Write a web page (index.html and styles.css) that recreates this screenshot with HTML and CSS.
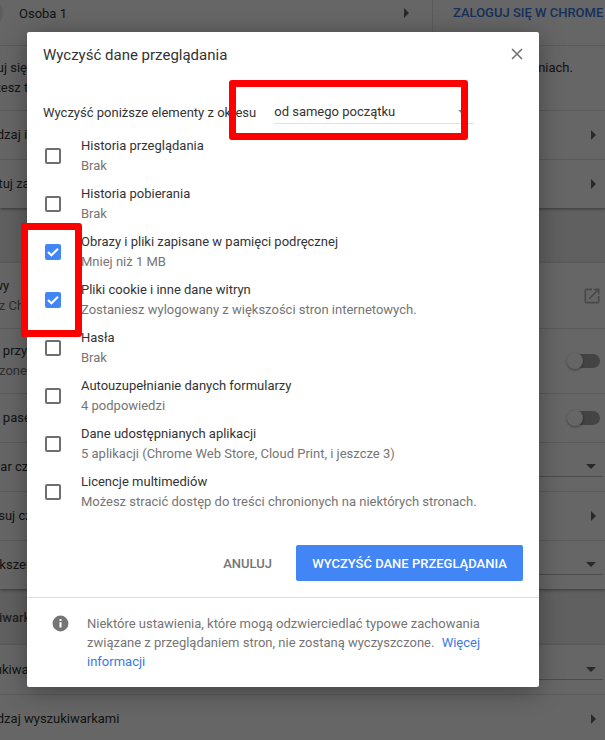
FILE: index.html
```html
<!DOCTYPE html>
<html lang="pl">
<head>
  <meta charset="UTF-8" />
  <meta name="viewport" content="width=device-width, initial-scale=1.0" />
  <title>Wyczyść dane przeglądania</title>
  <link rel="stylesheet" href="styles.css">
</head>
<body>
  <div class="settings">
    <section class="card">
      <div class="row person">
        <div class="avatar"></div>
        <span class="person-name">Osoba 1</span>
        <i class="arrow person-arrow"></i>
        <a class="signin">ZALOGUJ SIĘ W CHROME</a>
      </div>
      <div class="row tall">
        <div class="text">
          <div>Zaloguj się, żeby synchronizować zakładki, historię, hasła i inne twoje ustawienia na swoich urządzeniach.</div>
          <div>A możesz też zarządzać</div>
        </div>
      </div>
      <div class="row"><span class="text">Zarządzaj innymi</span><i class="arrow"></i></div>
      <div class="row"><span class="text">Importuj zakładki</span><i class="arrow"></i></div>
    </section>

    <div class="gap first-gap"></div>

    <section class="card">
      <div class="row tall">
        <div class="text">
          <div>Motywy</div>
          <div class="muted">Otwórz Chrome Web Store</div>
        </div>
        <svg class="external" viewBox="0 0 24 24"><path d="M19 19H5V5h7V3H5a2 2 0 0 0-2 2v14a2 2 0 0 0 2 2h14a2 2 0 0 0 2-2v-7h-2v7zM14 3v2h3.6l-9.8 9.8 1.4 1.4L19 6.4V10h2V3h-7z"/></svg>
      </div>
      <div class="row tall">
        <div class="text">
          <div>Pokaż przycisk strony</div>
          <div class="muted">Wyłączone</div>
        </div>
        <div class="toggle"></div>
      </div>
      <div class="row"><span class="text">Pokaż pasek zakładek</span><div class="toggle"></div></div>
      <div class="row"><span class="text">Rozmiar czcionki</span><div class="select"><i class="caret"></i></div></div>
      <div class="row"><span class="text">Dostosuj czcionki</span><i class="arrow"></i></div>
      <div class="row"><span class="text">Powiększenie strony</span><div class="select"><i class="caret"></i></div></div>
    </section>

    <div class="gap"><span class="gap-title">Wyszukiwarka</span></div>

    <section class="card">
      <div class="row"><span class="text">Wyszukiwarka używana</span><div class="select"><i class="caret"></i></div></div>
      <div class="row"><span class="text">Zarządzaj wyszukiwarkami</span><i class="arrow"></i></div>
    </section>
  </div>

  <div class="scrim"></div>

  <div class="dialog">
    <div class="dialog-head">
      <h1>Wyczyść dane przeglądania</h1>
      <svg class="close" viewBox="0 0 12 12"><path d="M1 1l10 10M11 1L1 11"/></svg>
    </div>

    <div class="period">
      <span>Wyczyść poniższe elementy z okresu</span>
      <div class="period-select">od samego początku<i class="caret small"></i></div>
    </div>

    <ul class="items">
      <li><span class="check"></span><div><div>Historia przeglądania</div><div class="sub">Brak</div></div></li>
      <li><span class="check"></span><div><div>Historia pobierania</div><div class="sub">Brak</div></div></li>
      <li>
        <span class="check on"><svg viewBox="0 0 16 16"><path d="M3 8l3.4 3.2L13 4.8"/></svg></span>
        <div><div>Obrazy i pliki zapisane w pamięci podręcznej</div><div class="sub">Mniej niż 1 MB</div></div>
      </li>
      <li>
        <span class="check on"><svg viewBox="0 0 16 16"><path d="M3 8l3.4 3.2L13 4.8"/></svg></span>
        <div><div>Pliki cookie i inne dane witryn</div><div class="sub">Zostaniesz wylogowany z większości stron internetowych.</div></div>
      </li>
      <li><span class="check"></span><div><div>Hasła</div><div class="sub">Brak</div></div></li>
      <li><span class="check"></span><div><div>Autouzupełnianie danych formularzy</div><div class="sub">4 podpowiedzi</div></div></li>
      <li><span class="check"></span><div><div>Dane udostępnianych aplikacji</div><div class="sub">5 aplikacji (Chrome Web Store, Cloud Print, i jeszcze 3)</div></div></li>
      <li><span class="check"></span><div><div>Licencje multimediów</div><div class="sub">Możesz stracić dostęp do treści chronionych na niektórych stronach.</div></div></li>
    </ul>

    <div class="actions">
      <button class="cancel">ANULUJ</button>
      <button class="confirm">WYCZYŚĆ DANE PRZEGLĄDANIA</button>
    </div>

    <div class="note">
      <svg class="info" viewBox="0 0 24 24"><path d="M12 2a10 10 0 1 0 0 20 10 10 0 0 0 0-20zm1.3 15h-2.6v-6.5h2.6V17zm0-8.2h-2.6V6.3h2.6v2.5z"/></svg>
      <p>Niektóre ustawienia, które mogą odzwierciedlać typowe zachowania związane z przeglądaniem stron, nie zostaną wyczyszczone. <a>Więcej informacji</a></p>
    </div>
  </div>

  <div class="marker marker-period"></div>
  <div class="marker marker-checks"></div>
</body>
</html>
```

FILE: styles.css
```css
* {
  box-sizing: border-box;
}
body {
  margin: 0;
  width: 605px;
  height: 740px;
  overflow: hidden;
  position: relative;
  background: #f1f1f1;
  font-family: Roboto, "Liberation Sans", sans-serif;
  font-size: 13px;
  color: #333333;
}

/* settings page behind the dialog */
.card {
  background: #ffffff;
  box-shadow: 0 1px 3px rgba(0, 0, 0, 0.45);
}
.row {
  height: 49px;
  display: flex;
  align-items: center;
  justify-content: space-between;
  padding-right: 5px;
  border-top: 1px solid #e4e4e4;
  white-space: nowrap;
}
.row:first-child {
  border-top: none;
}
.text {
  margin-left: -36px;
  line-height: 20px;
}
.muted {
  color: #757575;
}
.person {
  height: 64px;
  margin-top: -19px;
  padding-right: 0;
  justify-content: flex-start;
}
.avatar {
  width: 32px;
  height: 32px;
  margin-left: -29px;
  border-radius: 50%;
  background: #e8e8e8;
}
.person-name {
  margin-left: 16px;
}
.person-arrow {
  margin-left: auto;
}
.signin {
  margin-left: 19px;
  padding-left: 20px;
  line-height: 64px;
  border-left: 1px solid #e4e4e4;
  font-weight: 500;
  color: #3b78e7;
  width: 173px;
}
.tall {
  height: 65px;
}
.gap {
  height: 56px;
  display: flex;
  align-items: center;
}
.first-gap {
  height: 55px;
}
.gap-title {
  margin-left: -46px;
  font-weight: 500;
  color: #555555;
}
.arrow {
  width: 0;
  height: 0;
  margin-right: 4px;
  border-left: 5px solid #666666;
  border-top: 5px solid transparent;
  border-bottom: 5px solid transparent;
}
.select {
  width: 64px;
  height: 20px;
  margin-right: -3px;
  display: flex;
  justify-content: flex-end;
  align-items: center;
  padding-right: 7px;
  border-bottom: 1px solid #bdbdbd;
}
.caret {
  width: 0;
  height: 0;
  border-top: 5px solid #666666;
  border-left: 5px solid transparent;
  border-right: 5px solid transparent;
}
.caret.small {
  border-top-width: 3px;
  border-left-width: 3px;
  border-right-width: 3px;
  border-top-color: #888888;
}
.external {
  width: 20px;
  height: 20px;
  margin-right: -2px;
  fill: #b4b4b4;
}
.toggle {
  position: relative;
  width: 25px;
  height: 14px;
  border-radius: 7px;
  background: #aaaaaa;
}
.toggle::before {
  content: "";
  position: absolute;
  left: -8px;
  top: -1px;
  width: 16px;
  height: 16px;
  border-radius: 50%;
  background: #ffffff;
  box-shadow: 0 1px 3px rgba(0, 0, 0, 0.4);
}

.scrim {
  position: absolute;
  inset: 0;
  background: rgba(0, 0, 0, 0.6);
}

/* dialog */
.dialog {
  position: absolute;
  left: 27px;
  top: 32px;
  width: 512px;
  height: 655px;
  background: #ffffff;
  border-radius: 2px;
  box-shadow: 0 4px 24px rgba(0, 0, 0, 0.35);
  color: #333333;
}
.dialog-head {
  height: 46px;
  display: flex;
  justify-content: space-between;
  align-items: center;
  padding: 0 16px;
}
h1 {
  margin: 0;
  font-size: 15px;
  font-weight: 400;
  color: #333333;
}
.close {
  width: 12px;
  height: 12px;
  margin-top: -2px;
  fill: none;
  stroke: #6e6e6e;
  stroke-width: 1.5;
}
.period {
  margin-top: 13px;
  height: 42px;
  display: flex;
  align-items: center;
  padding-left: 16px;
}
.period-select {
  width: 200px;
  height: 24px;
  margin-left: 18px;
  display: flex;
  justify-content: space-between;
  align-items: center;
  padding-right: 10px;
  border-bottom: 1px solid #e0e0e0;
}
.items {
  list-style: none;
  margin: -1px 0 0;
  padding: 0 0 0 18px;
}
.items li {
  height: 48px;
  display: flex;
  align-items: center;
  gap: 20px;
  line-height: 20px;
}
.sub {
  color: #757575;
}
.check {
  width: 16px;
  height: 16px;
  flex: none;
  border: 2px solid #6e6e6e;
  border-radius: 2px;
}
.check.on {
  border: none;
  background: #4285f4;
}
.check svg {
  display: block;
  width: 16px;
  height: 16px;
  fill: none;
  stroke: #ffffff;
  stroke-width: 2.2;
}
.actions {
  margin-top: 29px;
  display: flex;
  justify-content: flex-end;
  align-items: center;
  padding-right: 16px;
  gap: 24px;
}
button {
  font-family: inherit;
  font-size: 13px;
  font-weight: 500;
  border: none;
  background: none;
  padding: 0;
  height: 36px;
  border-radius: 2px;
}
.cancel {
  color: #757575;
}
.confirm {
  width: 227px;
  background: #4285f4;
  color: #ffffff;
}
.note {
  margin-top: 16px;
  border-top: 1px solid #e0e0e0;
  display: flex;
  gap: 17px;
  padding: 16px 40px 0 24px;
}
.info {
  flex: none;
  width: 19px;
  height: 19px;
  fill: #757575;
}
.note p {
  margin: 0;
  line-height: 19px;
  color: #757575;
}
.note a {
  color: #3b78e7;
  margin-left: 4px;
}

/* red annotation frames */
.marker {
  position: absolute;
  border: 7px solid #ff0000;
  border-radius: 3px;
}
.marker-period {
  left: 229px;
  top: 80px;
  width: 239px;
  height: 60px;
}
.marker-checks {
  left: 21px;
  top: 223px;
  width: 61px;
  height: 114px;
}
```
